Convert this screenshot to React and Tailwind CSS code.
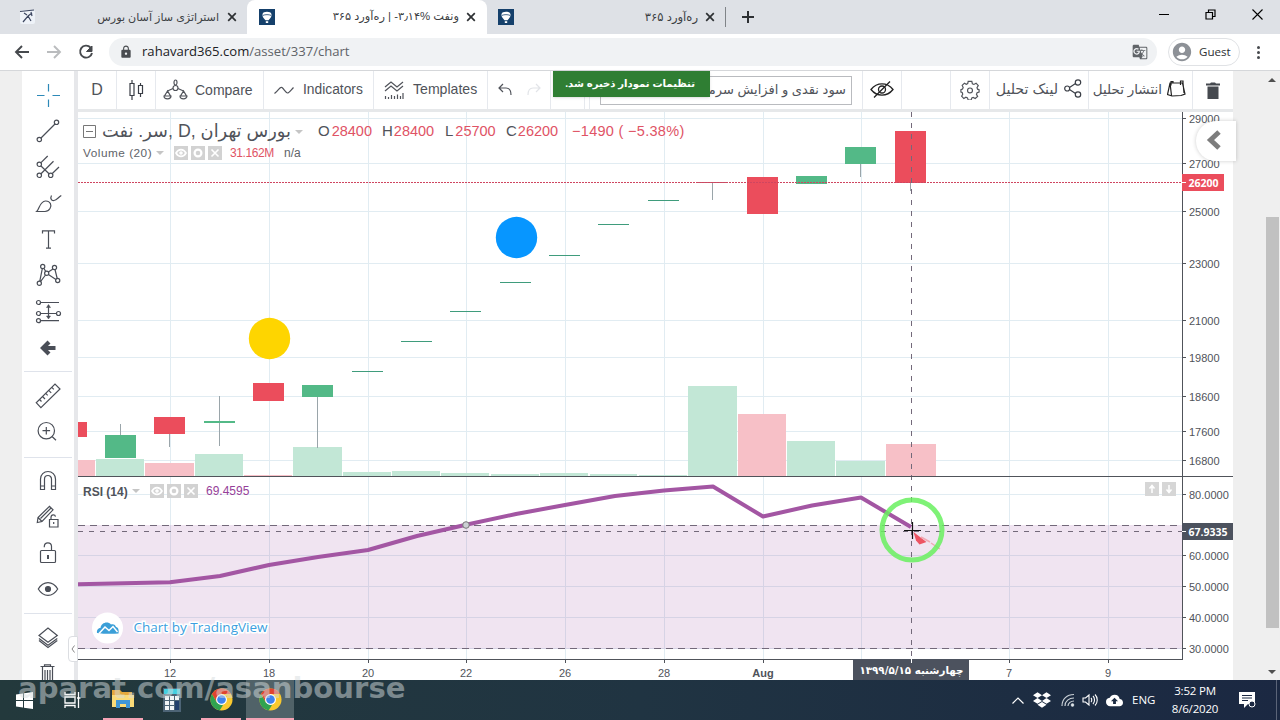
import { FaDropbox } from "react-icons/fa";
import { MdLock, MdGTranslate, MdAccountCircle, MdCloudUpload } from "react-icons/md";

const GREEN = "#53b987";
const RED = "#eb4d5c";

// x, top, bottom of the body, wick from, wick to
const candles = [
  { x: 105, top: 435, bottom: 458, wick: [424, 435], color: GREEN },
  { x: 154, top: 417, bottom: 434, wick: [434, 447], color: RED },
  { x: 204, top: 421, bottom: 423, wick: [396, 446], color: GREEN },
  { x: 253, top: 383, bottom: 401, color: RED },
  { x: 302, top: 385, bottom: 397, wick: [397, 448], color: GREEN },
  { x: 352, top: 371, bottom: 372, color: "#3f9c7c" },
  { x: 401, top: 341, bottom: 342, color: "#3f9c7c" },
  { x: 450, top: 311, bottom: 312, color: "#3f9c7c" },
  { x: 500, top: 282, bottom: 283, color: "#3f9c7c" },
  { x: 549, top: 255, bottom: 256, color: "#3f9c7c" },
  { x: 598, top: 224, bottom: 225, color: "#3f9c7c" },
  { x: 648, top: 200, bottom: 201, color: "#3f9c7c" },
  { x: 697, top: 182, bottom: 183, wick: [183, 200], color: "#c0566a" },
  { x: 747, top: 177, bottom: 214, color: RED },
  { x: 796, top: 176, bottom: 184, color: GREEN },
  { x: 845, top: 147, bottom: 164, wick: [164, 177], color: GREEN },
  { x: 895, top: 131, bottom: 183, wick: [183, 191], color: RED },
];

const volumes = [
  [78, 17, 460, "r"],
  [96, 48, 459, "g"],
  [145, 49, 463, "r"],
  [195, 48, 454, "g"],
  [244, 48, 475, "r"],
  [293, 49, 447, "g"],
  [343, 48, 472, "g"],
  [392, 48, 471, "g"],
  [441, 48, 473, "g"],
  [491, 48, 474, "g"],
  [540, 48, 473, "g"],
  [590, 47, 474, "g"],
  [639, 48, 475, "g"],
  [688, 49, 386, "g"],
  [738, 48, 414, "r"],
  [787, 48, 441, "g"],
  [836, 49, 461, "g"],
  [886, 50, 444, "r"],
];

const priceTicks = [
  [118, "29000"],
  [163, "27000"],
  [211, "25000"],
  [263, "23000"],
  [320, "21000"],
  [357, "19800"],
  [396, "18600"],
  [431, "17600"],
  [460, "16800"],
];

const rsiTicks = [
  [494, "80.0000"],
  [555, "60.0000"],
  [586, "50.0000"],
  [617, "40.0000"],
  [648, "30.0000"],
];

const timeTicks = [
  [170, "12"],
  [269, "18"],
  [368, "20"],
  [466, "22"],
  [565, "26"],
  [664, "28"],
  [763, "Aug"],
  [1009, "7"],
  [1108, "9"],
];

const rsiLine =
  "78,584.3 170,582.3 220,576 269,565 318,557 368,550 417,536 466,524.7 516,514 565,505 615,496 664,490.5 713,486.5 763,516.5 812,505.5 861,497.5 911,527";

const Tool = ({ children, color = "#4a4e57" }) => (
  <div className="flex h-9 w-full shrink-0 items-center pl-[11px]">
    <svg width="30" height="30" viewBox="0 0 30 30" fill="none" stroke={color} strokeWidth="1.2">
      {children}
    </svg>
  </div>
);

const Divider = () => <div className="mx-0.5 h-px shrink-0 bg-[#dfe3eb]" />;

const Balloon = () => (
  <svg width="16" height="16" viewBox="0 0 16 16">
    <rect width="16" height="16" fill="#15406b" />
    <path d="M3.500 5.200C4 2 12 2 12.500 5.200c.3 2.800-1.600 4.300-3 6h-3c-1.400-1.700-3.300-3.200-3-6z" fill="#fff" />
    <path d="M4 6.400c2-1 6-1 8 0" stroke="#15406b" fill="none" strokeWidth=".8" />
    <rect x="6.800" y="12.200" width="2.400" height="1.800" fill="#fff" />
  </svg>
);

const CloseX = () => (
  <svg width="10" height="10" viewBox="0 0 10 10" stroke="#2d3033" strokeWidth="1.700">
    <path d="M1.200 1.200l7.600 7.600M8.800 1.200l-7.600 7.600" />
  </svg>
);

const Tabs = () => (
  <div className="flex h-[34px] shrink-0 bg-[#dee1e6] text-[12px] text-[#3c4043]">
    <div className="flex w-[247px] items-center pl-[19px] pr-[10px]">
      <svg width="17" height="16" viewBox="0 0 17 16">
        <rect x="1" y="1" width="15" height="14" rx="2" fill="#eef2f8" />
        <path d="M1 2.500L15 1M4 13l5-6 3 5M8 6L5 4M12 3l1 4M9 7l4-3" stroke="#3c4660" fill="none" strokeWidth="1.200" />
      </svg>
      <span dir="rtl" className="ml-auto mr-2 whitespace-nowrap text-[11.1px]">استراتژی ساز آسان بورس</span>
      <CloseX />
    </div>
    <div className="flex w-[240px] items-center rounded-t-lg bg-white pl-3 pr-[11px]">
      <Balloon />
      <span dir="rtl" className="ml-auto mr-[7px] whitespace-nowrap text-[11.4px]">
        ونفت <bdi dir="ltr">-۳٫۱۴%</bdi> | ره‌آورد ۳۶۵
      </span>
      <CloseX />
    </div>
    <div className="flex w-[239px] items-center pl-[11px] pr-[11px]">
      <Balloon />
      <span dir="rtl" className="ml-auto mr-[7px] whitespace-nowrap text-[11.6px]">ره‌آورد ۳۶۵</span>
      <CloseX />
    </div>
    <div className="flex items-center gap-4">
      <div className="-ml-px h-5 w-px bg-[#808488]" />
      <svg width="12" height="12" viewBox="0 0 12 12" stroke="#2d3033" strokeWidth="2">
        <path d="M6 0v12M0 6h12" />
      </svg>
    </div>
    <div className="ml-auto mr-[17px] flex h-[28px] items-center gap-[36px]">
      <svg width="10" height="10" viewBox="0 0 10 10" stroke="#000">
        <path d="M0 5.500h10" />
      </svg>
      <svg width="11" height="11" viewBox="0 0 11 11" stroke="#000" fill="none" strokeWidth="1.200">
        <path d="M1 3.500h6.500v6.500H1zM3.500 3V1H10v6.500H8" />
      </svg>
      <svg width="11" height="11" viewBox="0 0 11 11" stroke="#000" strokeWidth="1.100">
        <path d="M.5.5l10 10M10.500.5l-10 10" />
      </svg>
    </div>
  </div>
);

const AddressBar = () => (
  <div className="flex h-[37px] shrink-0 items-center border-b border-[#d5d7da] bg-white font-['Open_Sans',sans-serif]">
    <svg className="ml-[14px]" width="82" height="18" viewBox="0 0 82 18" fill="none" stroke="#46494d" strokeWidth="1.900">
      <path d="M15 9H2M8 3L2 9l6 6" />
      <path d="M33 9h13M40 3l6 6-6 6" stroke="#babcbe" />
      <path d="M76.500 4.500A6 6 0 1 0 78 10" />
      <path d="M78 3v5.500h-5.500z" fill="#46494d" strokeWidth="1" />
    </svg>
    <div className="ml-[13px] flex h-[28px] w-[1048px] items-center rounded-full bg-[#f0f2f4] pl-[10px] text-[13.1px] text-[#5f6368]">
      <MdLock size={14} color="#4a4d51" />
      <span className="ml-[9px] whitespace-nowrap">
        <span className="text-[#202124]">rahavard365.com</span>/asset/337/chart
      </span>
      <MdGTranslate className="ml-auto mr-[9px]" size={16} color="#606468" />
    </div>
    <div className="ml-[11px] flex h-[28px] w-[72px] items-center rounded-full border border-[#e0e2e5] pl-0.5 text-[11.600px] text-[#2d3033]">
      <MdAccountCircle size={22} color="#8d9197" />
      <span className="ml-[6px]">Guest</span>
    </div>
    <div className="ml-[17px] flex flex-col gap-[2px]">
      <i className="size-[3px] rounded-full bg-[#46494d]" />
      <i className="size-[3px] rounded-full bg-[#46494d]" />
      <i className="size-[3px] rounded-full bg-[#46494d]" />
    </div>
  </div>
);

const Sidebar = () => (
  <div className="flex w-[52px] shrink-0 flex-col overflow-hidden bg-white pt-1.5 *:shrink-0">
    <Tool color="#2d89b8">
      <path d="M4 15.500h7.500M19.500 15.500H27M15.500 4v7.500M15.500 19.500V27" />
    </Tool>
    <Tool>
      <circle cx="6.300" cy="23.500" r="2.200" />
      <circle cx="23.500" cy="6.300" r="2.200" />
      <path d="M8 22L22 8" />
    </Tool>
    <Tool>
      <circle cx="6.300" cy="12.300" r="2.200" />
      <circle cx="6.300" cy="23.300" r="2.200" />
      <circle cx="17.700" cy="23.300" r="2.200" />
      <path d="M8 10.700L14.700 4M8 21.700L20.500 9.300M19.300 21.500L26 15M8 14l8 7.800" />
    </Tool>
    <Tool>
      <path d="M3.700 23.500C6.500 21 6.500 13.500 12.500 13c5-.2 6.500 4.500 4.500 7.500-1.200 2-3 3-5 3zM18.500 7.500c-1.500 3-.2 5.500 2.500 5 3-.3 4-3 7.300-5" />
    </Tool>
    <Tool>
      <path d="M9.500 9.500V6.800h12v2.700M15.500 6.800V24M13 24.200h5" />
    </Tool>
    <Tool>
      <circle cx="9.700" cy="6.500" r="2.100" />
      <circle cx="21.500" cy="7.500" r="2.100" />
      <circle cx="13.700" cy="13.200" r="2.100" />
      <circle cx="6.300" cy="23.300" r="2.100" />
      <circle cx="24.700" cy="20.500" r="2.100" />
      <path d="M9.300 8.600L6.800 21.200M10.800 8.300l1.900 3.100M15.300 11.900l4.700-3M22 9.500l2.200 9M15.400 14.400l7.500 5M12.500 15l-5 6.600" />
    </Tool>
    <Tool>
      <circle cx="5.500" cy="6.500" r="2" />
      <circle cx="5.500" cy="17.500" r="2" />
      <circle cx="25.500" cy="17.500" r="2" />
      <circle cx="5.500" cy="24.700" r="2" />
      <path d="M7.500 6.500H26M7.500 17.500h16M7.500 24.700H26M15.500 9.500v12" />
      <path d="M13.500 11.500l2-3 2 3zM13.500 20l2 3 2-3z" fill="#4a4e57" strokeWidth=".5" />
    </Tool>
    <Tool>
      <path d="M16 10L10 16l6 6M10.500 16h12" strokeWidth="4.200" />
    </Tool>
    <div className="h-1.5" />
    <Divider />
    <div className="h-1.5" />
    <Tool>
      <path d="M3.200 21.700l4.700 5L27 8l-5-5zM6.500 18.500l2 2M9.500 15.500l2.500 2.500M12.700 12.300l2 2M15.700 9.300l2.500 2.500M18.800 6.300l2 2" />
    </Tool>
    <Tool>
      <circle cx="13.300" cy="13.700" r="8.200" />
      <path d="M13.300 10v7.500M9.500 13.700h7.600M19.300 19.700l3.700 3.500" />
    </Tool>
    <div className="h-[7px]" />
    <Divider />
    <div className="h-[5px]" />
    <Tool>
      <path d="M7.500 23.500V13a7.500 7.500 0 0 1 15 0v10.500h-4V13a3.500 3.500 0 0 0-7 0v10.500zM7.500 20h4M18.500 20h4" />
    </Tool>
    <Tool>
      <path d="M4.300 20.500l.7-5L16.500 4.300l3.500 3.500L9 19.500zM5 15.500l4 4M7.500 16.500L18 6" />
      <path d="M16.500 17.500H25V25h-8.500zM18 17.500v-2.300c.2-3 4-3 4.500-.5M20.700 20v2" />
    </Tool>
    <Tool>
      <rect x="7.500" y="12.500" width="15" height="12" rx="1" />
      <path d="M18.500 12.500V8.300c-.2-4.700-7-4.700-7.200 0v1" />
      <path d="M15 17v4" strokeWidth="2" />
    </Tool>
    <Tool>
      <path d="M5.300 15c5-8.500 14.400-8.500 19.400 0-5 8.500-14.400 8.500-19.400 0z" />
      <circle cx="15" cy="15" r="2.500" fill="#4a4e57" />
    </Tool>
    <div className="h-1.5" />
    <Divider />
    <div className="h-[5px]" />
    <Tool>
      <path d="M6 13.500l9-7.500 9.300 7.500L15 20.300zM6 16.500l9 6.800 9.300-6.800M6 18.500l9 7 9.300-7" />
    </Tool>
    <Tool>
      <path d="M7.500 8.500h14M11.500 8.500V6.800h6v1.700M9.500 9v19M19.500 9v19M12 12v16M14.500 12v16M17 12v16" />
    </Tool>
  </div>
);

const ChartToolbar = () => (
  <div className="flex h-[38px] shrink-0 bg-white text-[14px] text-[#50535a] *:flex *:h-full *:shrink-0 *:items-center *:border-r *:border-[#e6e9ee]">
    <div className="w-[39px] justify-center text-[16px]">D</div>
    <div className="w-[39px] justify-center">
      <svg width="16" height="22" viewBox="0 0 16 22" fill="none" stroke="#3a3e46" strokeWidth="1.200">
        <path d="M2 4.500h4v12H2zM4 1v3.500M4 16.500V21M10.500 6.500h4v8h-4zM12.500 4v2.500M12.500 14.500V18" />
      </svg>
    </div>
    <div className="w-[108px] pl-[7px]">
      <svg width="25" height="22" viewBox="0 0 25 22" fill="none" stroke="#50535a" strokeWidth="1.200">
        <ellipse cx="12.500" cy="3.500" rx="1.500" ry="2.500" />
        <circle cx="12.500" cy="9" r="2.500" />
        <path d="M10 9.500L4.500 12M15 9.500l5.500 2.500M4.500 12l-3 5h6zM20.500 12l-3 5h6zM1 17a3.500 2.800 0 0 0 7 0zM17 17a3.500 2.800 0 0 0 7 0z" />
      </svg>
      <span className="ml-[7px]">Compare</span>
    </div>
    <div className="w-[110px] pl-[10px]">
      <svg width="20" height="12" viewBox="0 0 20 12" fill="none" stroke="#50535a" strokeWidth="1.200">
        <path d="M.5 9.500C5 6 6 2 8 3.500s4 5.500 5.500 5.500S17 6 19.500 3.500" />
      </svg>
      <span className="ml-[9px] text-[13.800px]">Indicators</span>
    </div>
    <div className="w-[114px] pl-[10px]">
      <svg width="20" height="20" viewBox="0 0 20 20" fill="none" stroke="#50535a" strokeWidth="1.200">
        <path d="M1 7l6-5 6 5 6-5M1 11l6-5 6 5 6-5M1.500 16v3M4.500 17v2M7.500 15v4M10.500 16v3M13.500 14.500V19M16.500 16v3M19 13v6" />
      </svg>
      <span className="ml-[9px] text-[14.100px]">Templates</span>
    </div>
    <div className="w-[63px] pl-[10px]">
      <svg width="43" height="14" viewBox="0 0 43 14" fill="none" stroke="#50535a" strokeWidth="1.200">
        <path d="M5 1L1 5l4 4M1.500 5H8c4 0 5 3.500 5 7" />
        <path d="M38 1l4 4-4 4M41.500 5H35c-4 0-5 3.500-5 7" stroke="#e2e4e8" />
      </svg>
    </div>
    <div className="w-[34px] justify-center">
      <svg width="20" height="14" viewBox="0 0 20 14" fill="none" stroke="#50535a">
        <circle cx="5" cy="10" r="3" />
        <circle cx="15" cy="10" r="3" />
      </svg>
    </div>
    <div className="w-[5px]" />
    <div className="w-[273px] pl-[10px]">
      <div dir="rtl" className="flex h-[29px] w-[252px] items-center overflow-hidden whitespace-nowrap border border-[#b9bbbf] pr-[5px] text-[13px]">
        سود نقدی و افزایش سرمایه
      </div>
    </div>
    <div className="w-[39px] justify-center">
      <svg width="24" height="18" viewBox="0 0 24 18" fill="none" stroke="#222" strokeWidth="1.300">
        <path d="M1 8.500C7 1 17 1 23 8.500 17 16 7 16 1 8.500zM4 16.500L20 .5" />
        <circle cx="12" cy="8.500" r="3.500" />
      </svg>
    </div>
    <div className="w-[49px]" />
    <div className="w-[39px] justify-center">
      <svg width="20" height="20" viewBox="0 0 22 22" fill="none" stroke="#50535a" strokeWidth="1.300">
        <path d="M9 1.500h4l.6 2.600 1.700.8L17.700 3.500l2.400 2.600-1.400 2.300.6 1.700 1.700.6v2.500l-2.200.9-.7 1.700 1.300 2.300-2.600 2.300-2.300-1.300-1.500.6-.7 2.300H9l-.8-2.300-1.700-.7-2.300 1.400-2.400-2.600 1.200-2.200-.6-1.800-1.400-.6v-2.600l1.800-.7.7-1.700-1.100-2.200L4.900 3.500l2 1.200 1.600-.7z" />
        <circle cx="11" cy="11.500" r="2.700" />
      </svg>
    </div>
    <div className="w-[99px] justify-end gap-[6px] pr-[6px]">
      <span dir="rtl" className="whitespace-nowrap text-[14.200px]">لینک تحلیل</span>
      <svg className="mb-[3px]" width="18" height="19" viewBox="0 0 18 19" fill="none" stroke="#3a3e46" strokeWidth="1.200">
        <circle cx="3.200" cy="9.500" r="2.500" />
        <circle cx="14" cy="3.500" r="2.700" />
        <circle cx="14" cy="15.500" r="2.700" />
        <path d="M5.500 8.500l6-4M5.500 10.500l6 4" />
      </svg>
    </div>
    <div className="w-[104px] justify-end gap-[5px] pr-[6px]">
      <span dir="rtl" className="whitespace-nowrap text-[13.500px]">انتشار تحلیل</span>
      <svg className="mb-[3px]" width="19" height="18" viewBox="0 0 19 18" fill="none" stroke="#222" strokeWidth="1.200">
        <path d="M3 3h12.500l2.500 11-4 1.500-9 .5-4.500-1.500zM3 3l1.500 12.500M4 5.500V1.700h2V3M13.500 5V1h2.500v3M16 3l1 10" />
      </svg>
    </div>
    <div className="w-[40px] justify-center border-r-0!">
      <svg width="14" height="17" viewBox="0 0 14 17" fill="#45494f">
        <path d="M0 1.500h4L5 .5h4l1 1h4V3.500H0zM1.500 4.500h11V17h-11z" />
      </svg>
    </div>
  </div>
);

const GreyButtons = () => (
  <svg width="48" height="14" viewBox="0 0 48 14" fill="none" stroke="#fff" strokeWidth="1.600">
    <path d="M0 0h14v14H0zM17 0h14v14H17zM34 0h14v14H34z" fill="#d2d2d2" stroke="none" />
    <path d="M2 7c2.500-4.500 7.500-4.500 10 0-2.500 4.500-7.500 4.500-10 0z" />
    <circle cx="7" cy="7" r="1" />
    <circle cx="24" cy="7" r="3.400" strokeWidth="2.200" />
    <path d="M37.500 3.500l7 7M44.500 3.500l-7 7" />
  </svg>
);

const Caret = () => <i className="border-x-4 border-t-4 border-x-transparent border-t-[#c5c5c5]" />;

const Legend = () => (
  <>
    <div className="absolute left-[5px] top-[8px] flex h-[23px] items-center whitespace-nowrap text-[14.500px] text-[#50535a]">
      <svg width="13" height="13" viewBox="0 0 13 13" fill="none" stroke="#777">
        <path d="M.5.5h12v12H.5zM3 6.500h7" />
      </svg>
      <span className="ml-[6px] w-[193px] text-[17.800px]">سر. نفت, D, بورس تهران</span>
      <Caret />
      <span className="ml-[15px] w-[64px] text-[15px]">O<span className="ml-[2px] text-[14.500px] text-[#e05365]">28400</span></span>
      <span className="w-[63px] text-[15px]">H<span className="ml-[1px] text-[14.500px] text-[#e05365]">28400</span></span>
      <span className="w-[61px] text-[15px]">L<span className="ml-[2px] text-[14.500px] text-[#e05365]">25700</span></span>
      <span className="w-[66px] text-[15px]">C<span className="ml-[1px] text-[14.500px] text-[#e05365]">26200</span></span>
      <span className="tracking-[0.300px] text-[#e05365]">−1490 ( −5.38%)</span>
    </div>
    <div className="absolute left-[5px] top-[33px] flex h-4 items-center whitespace-nowrap text-[12px] text-[#606369]">
      <span className="w-[73px] pt-0.5 text-[11.800px] tracking-[0.500px]">Volume (20)</span>
      <Caret />
      <span className="ml-[10px]"><GreyButtons /></span>
      <span className="ml-[8px] w-[54px] tracking-[-0.400px] text-[#e05365]">31.162M</span>
      <span>n/a</span>
    </div>
    <div className="absolute left-[5px] top-[371px] flex h-4 items-center whitespace-nowrap text-[12px] text-[#50535a]">
      <span className="w-[49px] pt-px text-[12px] font-bold">RSI (14)</span>
      <Caret />
      <span className="ml-[10px]"><GreyButtons /></span>
      <span className="ml-[8px] text-[#963f99]">69.4595</span>
    </div>
  </>
);

const Chart = () => (
  <svg className="block" width="1155" height="568" viewBox="78 112 1155 568" fontFamily="Liberation Sans, Arial, sans-serif">
    <rect x="78" y="112" width="1155" height="568" fill="#fff" />
    <g stroke="#e1ecf2" shapeRendering="crispEdges">
      {priceTicks.map(([y]) => (
        <path key={y} d={`M78 ${y + 0.5}H1182`} />
      ))}
      {rsiTicks.map(([y]) => (
        <path key={y} d={`M78 ${y + 0.5}H1182`} />
      ))}
      {timeTicks.map(([x]) => (
        <path key={x} d={`M${x + 0.5} 112V659`} />
      ))}
      <path d="M861.500 112V659" />
    </g>
    <rect x="78" y="525" width="1104" height="124" fill="#963f99" fillOpacity="0.14" />

    {/* volume */}
    {volumes.map(([x, w, y, c]) => (
      <rect key={x} x={x} y={y} width={w} height={476 - y} fill={c === "g" ? "#c2e7d6" : "#f7c0c7"} />
    ))}

    {/* candles */}
    <rect x="78" y="422" width="9" height="15" fill={RED} />
    {candles.map(({ x, top, bottom, wick, color }) => (
      <g key={x} shapeRendering="crispEdges">
        {wick && <path d={`M${x + 15.5} ${wick[0]}V${wick[1]}`} stroke="#9aa5aa" />}
        <rect x={x} y={top} width="31" height={bottom - top} fill={color} />
      </g>
    ))}
    <path d="M78 182.500H1182" stroke="#cf4660" strokeDasharray="2 1" />
    <circle cx="269.500" cy="338.500" r="20.700" fill="#fed500" />
    <circle cx="516.500" cy="237.500" r="20.700" fill="#0796ff" />

    {/* rsi */}
    <g stroke="#73697a" fill="none">
      <path d="M78 525.500H1182M78 648.500H1182" strokeDasharray="7 5" />
      <path d="M78 531.500H1182" strokeDasharray="5 6" />
      <path d="M911.500 112V659" strokeDasharray="5 6" />
    </g>
    <polyline points={rsiLine} fill="none" stroke="#a356a3" strokeWidth="4" strokeLinejoin="round" />
    <circle cx="466" cy="525" r="3.300" fill="#ccd0d4" stroke="#777" />

    {/* axes */}
    <g stroke="#50535a" shapeRendering="crispEdges" fill="none">
      <path d="M78 476.500H1233M78 659.500H1182.500V112" />
      {priceTicks.concat(rsiTicks).map(([y]) => (
        <path key={y} d={`M1182 ${y + 0.5}h4`} />
      ))}
      {timeTicks.map(([x]) => (
        <path key={x} d={`M${x + 0.5} 659v4`} />
      ))}
    </g>
    <g fontSize="11" fill="#50535a">
      {priceTicks.concat(rsiTicks).map(([y, label]) => (
        <text key={label} x="1189" y={y + 5}>
          {label}
        </text>
      ))}
      {timeTicks.map(([x, label]) => (
        <text key={label} x={x} y="677" textAnchor="middle" fontWeight={label === "Aug" ? "bold" : "normal"}>
          {label}
        </text>
      ))}
    </g>
    <rect x="1182" y="174" width="42" height="17" fill={RED} />
    <rect x="1182" y="523" width="51" height="17" fill="#4c525e" />
    <path d="M1182 182.500h4M1182 531.500h4" stroke="#fff" />
    <g fontFamily="Open Sans, sans-serif" fontWeight="bold" fontSize="11" fill="#fff">
      <text x="1188.500" y="186.500" textLength="30" lengthAdjust="spacingAndGlyphs">26200</text>
      <text x="1188.500" y="535.500" textLength="39" lengthAdjust="spacingAndGlyphs">67.9335</text>
    </g>
    <rect x="853" y="659" width="116" height="21" fill="#4c525e" />
    <path d="M911.500 659v4" stroke="#fff" />
    <text x="911.500" y="674" textAnchor="middle" direction="rtl" fontFamily="DejaVu Sans, sans-serif" fontSize="10.500" fontWeight="bold" fill="#fff" textLength="104" lengthAdjust="spacingAndGlyphs">
      چهارشنبه ۱۳۹۹/۵/۱۵
    </text>

    {/* pane arrows */}
    <path d="M1145 482h14v14h-14zM1162 482h14v14h-14z" fill="#d6d6d6" />
    <path d="M1152 493v-7m-2.500 2.500l2.500-3 2.500 3M1169 485v7m-2.500-2.500l2.500 3 2.500-3" stroke="#fff" strokeWidth="1.500" fill="none" />

    {/* attribution */}
    <circle cx="107.500" cy="628" r="15.500" fill="#fff" />
    <path d="M97 633c-.5-3.500 1.500-5 3.500-5 .5-5 7-7.500 10.500-3.500 2.500-1 4.500.5 5 2.500 2.500.5 3 3 2.500 6.500-6 .5-15 .5-21.500-.5z" fill="#3b9fd8" />
    <path d="M99 633.500l6-6.500 4 3.500 4-4 4.500 5.500" fill="none" stroke="#fff" strokeWidth="1.500" />
    <text x="133.500" y="632" fontFamily="Open Sans, sans-serif" fontSize="13" fontWeight="500" fill="#3b9fe0" stroke="#fff" strokeWidth="3" paintOrder="stroke" textLength="134" lengthAdjust="spacingAndGlyphs">
      Chart by TradingView
    </text>

    {/* pointer */}
    <path d="M913.500 532l13 10-7 2.500-3.500-4z" fill="#ed5463" />
    <path d="M921 537l9 5M931 543l9 6" stroke="#efa9b4" strokeWidth="1.500" />
    <circle cx="912" cy="530" r="30" fill="none" stroke="#69f05f" strokeOpacity=".85" strokeWidth="5" />
    <path d="M904 530.500h17M912.500 522v17" stroke="#111" strokeWidth="1.200" />
  </svg>
);

const Chrome = () => (
  <svg width="23" height="23" viewBox="0 0 24 24">
    <circle cx="12" cy="12" r="11.500" fill="#f9c92f" />
    <path d="M2 6.300A11.500 11.500 0 0 1 22 6.300H12L7 14.800z" fill="#e0442f" />
    <path d="M2 6.300l5 8.500 5 2.700 1.500.5-3.500 5.400A11.500 11.500 0 0 1 2 6.300z" fill="#30a350" />
    <circle cx="12" cy="12" r="5.700" fill="#fff" />
    <circle cx="12" cy="12" r="4.500" fill="#3f83ee" />
  </svg>
);

const Taskbar = () => (
  <div className="flex h-10 shrink-0 items-stretch bg-linear-to-r from-[#23393c] via-[#203442] to-[#1b2842] font-['Open_Sans',sans-serif] text-white">
    <div className="flex w-12 items-center justify-center">
      <svg width="17" height="17" viewBox="0 0 17 17" fill="#fff">
        <path d="M0 2.500L7 1.500V8H0zM8 1.300L17 0v8H8zM0 9h7v6.500l-7-1zM8 9h9v8l-9-1.300z" />
      </svg>
    </div>
    <div className="flex w-12 items-center justify-center">
      <svg width="17" height="16" viewBox="0 0 17 16" fill="none" stroke="#fff" strokeWidth="1.300">
        <path d="M1 5h10v6H1zM1 0v2.500h10V0M1 16v-2.500h10V16M14.500 0v16M13 6h3.500" />
      </svg>
    </div>
    <div className="ml-[7px] flex w-[40px] items-center justify-center border-b-2 border-[#f5a3b5]">
      <svg width="22" height="20" viewBox="0 0 22 20">
        <path d="M0 1h8l2 2h10v15H0z" fill="#e6a93c" />
        <path d="M0 6h22v12H0z" fill="#fbdb78" />
        <path d="M4 19v-8h14v8h-4v-4H8v4z" fill="#3f96d8" />
      </svg>
    </div>
    <div className="ml-[3px] flex w-[52px] items-center justify-center">
      <svg width="18" height="24" viewBox="0 0 18 24">
        <rect width="18" height="24" fill="#4d6476" />
        <rect x="1" y="1" width="16" height="5" fill="#44cfe0" />
        <path d="M2 8h4v4H2zM7 8h4v4H7zM2 13h4v4H2zM7 13h4v4H7zM2 18h4v4H2zM7 18h4v4H7zM12 8h4v4h-4z" fill="#f1f4f6" />
        <path d="M12 13h4v9h-4z" fill="#223f6c" />
      </svg>
    </div>
    <div className="ml-[3px] flex w-[40px] items-center justify-center border-b-2 border-[#f5a3b5]">
      <Chrome />
    </div>
    <div className="ml-[5px] flex w-12 items-center justify-center border-b-2 border-[#f5a3b5] bg-[#506268]">
      <Chrome />
    </div>
    <div className="ml-auto flex items-center text-[12px]">
      <svg width="12" height="7" viewBox="0 0 12 7" fill="none" stroke="#fff" strokeWidth="1.200">
        <path d="M.5 6.500L6 1l5.500 5.500" />
      </svg>
      <FaDropbox className="ml-[9px]" size={18} />
      <svg className="ml-[10px]" width="14" height="14" viewBox="0 0 14 14" fill="none" stroke="#c9d0d6" strokeWidth="1.200">
        <path d="M1 13C1 6 6 1.500 13 1.500M4 13c0-5 4-8 9-8M7 13c0-3 3-5 6-5" />
        <circle cx="11.500" cy="12" r="1.200" fill="#fff" />
      </svg>
      <svg className="ml-[7px]" width="16" height="14" viewBox="0 0 16 14" fill="none" stroke="#fff" strokeWidth="1.100">
        <path d="M1 5h2.500L7 2v10L3.500 9H1zM9 5c1 1 1 3 0 4M11 3c2 2 2 6 0 8M13 1.500c3 3 3 8 0 11" />
      </svg>
      <MdCloudUpload className="ml-[8px]" size={17} />
      <span className="ml-[9px] w-[28px] text-[11.500px]">ENG</span>
      <div className="ml-[5px] w-[60px] text-center text-[11.500px] leading-[18px] tracking-[-0.200px]">
        <div>3:52 PM</div>
        <div>8/6/2020</div>
      </div>
      <svg className="ml-[14px]" width="18" height="17" viewBox="0 0 18 17" fill="#fff">
        <path d="M0 0h16v12H9l-4 4v-4H0z" />
        <path d="M3 3.500h10M3 6h10M3 8.500h6" stroke="#1b2842" />
        <circle cx="13" cy="12" r="3" fill="#1b2842" stroke="#fff" />
      </svg>
      <div className="ml-[19px] mr-[3px] h-10 w-px bg-[#5b6478]" />
    </div>
  </div>
);

const App = () => {
  return (
    <div className="relative flex h-[720px] w-[1280px] flex-col overflow-hidden bg-white font-['Liberation_Sans','DejaVu_Sans',sans-serif]">
      <Tabs />
      <AddressBar />

      <div className="flex h-[609px] shrink-0 bg-[#efefef]">
        <div className="w-[22px] shrink-0" />
        <Sidebar />
        <div className="relative w-1 shrink-0 bg-[#e6e7ea]">
          <div className="absolute -left-[6px] top-[565px] flex h-[26px] w-[10px] items-center justify-center rounded-l border border-[#dcdee2] bg-white">
            <svg width="4" height="8" viewBox="0 0 4 8" fill="none" stroke="#888">
              <path d="M3.500.5L1 4l2.500 3.500" />
            </svg>
          </div>
        </div>
        <div className="relative flex w-[1155px] shrink-0 flex-col">
          <ChartToolbar />
          <div className="h-[3px] shrink-0 bg-[#e6e8ea]" />
          <div className="relative">
            <Chart />
            <Legend />
            <div className="absolute -right-[3px] top-[9px] flex h-[40px] w-[40px] items-center justify-center rounded-l-full bg-white shadow-[0_0_4px_rgba(0,0,0,0.200)]">
              <svg className="mr-[5px] mb-0.5" width="15" height="20" viewBox="0 0 15 20" fill="none" stroke="#7d7d7d" strokeWidth="5">
                <path d="M13 2L4.500 10l8.500 8" />
              </svg>
            </div>
          </div>
          <div dir="rtl" className="absolute left-[475px] top-0 flex h-[26px] w-[157px] items-center whitespace-nowrap bg-[#2f7e33] pr-[15px] text-[10.100px] font-bold text-white shadow-sm">
            تنظیمات نمودار ذخیره شد.
          </div>
        </div>
        <div className="ml-auto flex w-4 flex-col items-center pt-[7px] pb-[6px]">
          <i className="border-x-4 border-b-4 border-x-transparent border-b-[#505050]" />
          <div className="mt-[135px] h-[411px] w-[13px] bg-[#c1c1c1]" />
          <i className="mt-auto border-x-4 border-t-4 border-x-transparent border-t-[#505050]" />
        </div>
      </div>

      <Taskbar />

      {/* channel watermark */}
      <div className="absolute left-[18px] top-[670px] whitespace-nowrap font-['DejaVu_Sans',sans-serif] text-[29.100px] font-bold leading-[36px] text-[#d5dcdd]/50">
        aparat.com/asanbourse
      </div>
    </div>
  );
};

export default App;
